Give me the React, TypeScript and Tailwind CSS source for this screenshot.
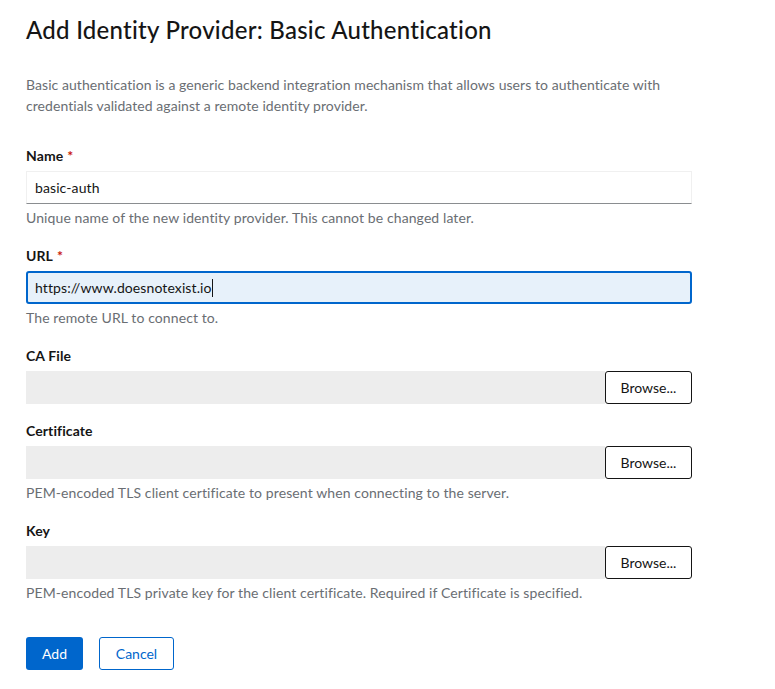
import React from 'react';

const font = { fontFamily: 'Lato, "Noto Sans", sans-serif' };

const Label: React.FC<{ text: string; required?: boolean }> = ({ text, required }) => (
  <div className="text-[14px] leading-[21px] font-bold text-[#151515] tracking-[0.1px]">
    {text}
    {required && <span className="text-[#c9190b] ml-[4px]">*</span>}
  </div>
);

const Helper: React.FC<{ text: string }> = ({ text }) => (
  <div className="mt-[4px] text-[14px] leading-[20px] text-[#6a6e73] tracking-[0.1px]">{text}</div>
);

const FileRow: React.FC = () => (
  <div className="mt-[5px] flex h-[33px] w-[666px]">
    <div className="flex-1 bg-[#ededed]" />
    <button className="w-[87px] h-[33px] border border-[#151515] rounded-[3px] bg-white text-[14px] text-[#151515]">
      Browse...
    </button>
  </div>
);

export default function App() {
  return (
    <div className="bg-white min-h-[689px] pl-[26px] pt-[14px]" style={font}>
      <h1 className="text-[24px] leading-[31px] font-medium text-[#151515] tracking-[0.25px]">
        Add Identity Provider: Basic Authentication
      </h1>
      <p className="mt-[29px] w-[680px] text-[14px] leading-[21px] text-[#6a6e73] tracking-[0.06px]">
        Basic authentication is a generic backend integration mechanism that allows users to authenticate with
        credentials validated against a remote identity provider.
      </p>

      <div className="mt-[29px] flex flex-col">
        <div>
          <Label text="Name" required />
          <div className="mt-[5px] h-[33px] w-[666px] border border-[#f0f0f0] border-b-[#8a8d90] flex items-center pl-[8px] text-[14px] text-[#151515] tracking-[0.1px]">
            basic-auth
          </div>
          <Helper text="Unique name of the new identity provider. This cannot be changed later." />
        </div>

        <div className="mt-[17px]">
          <Label text="URL" required />
          <div className="mt-[5px] h-[33px] w-[666px] border-2 border-[#0066cc] rounded-[3px] bg-[#e7f1fa] flex items-center pl-[7px] text-[14px] text-[#151515] tracking-[0.1px]">
            https://www.doesnotexist.io
            <span className="inline-block w-[1px] h-[18px] bg-[#151515]" />
          </div>
          <Helper text="The remote URL to connect to." />
        </div>

        <div className="mt-[17px]">
          <Label text="CA File" />
          <FileRow />
        </div>

        <div className="mt-[16px]">
          <Label text="Certificate" />
          <FileRow />
          <Helper text="PEM-encoded TLS client certificate to present when connecting to the server." />
        </div>

        <div className="mt-[17px]">
          <Label text="Key" />
          <FileRow />
          <Helper text="PEM-encoded TLS private key for the client certificate. Required if Certificate is specified." />
        </div>
      </div>

      <div className="mt-[34px] flex gap-[16px]">
        <button className="h-[33px] w-[57px] rounded-[3px] bg-[#0066cc] text-white text-[14px]">Add</button>
        <button className="h-[33px] w-[75px] rounded-[3px] border border-[#0066cc] text-[#0066cc] text-[14px] bg-white">
          Cancel
        </button>
      </div>
    </div>
  );
}
